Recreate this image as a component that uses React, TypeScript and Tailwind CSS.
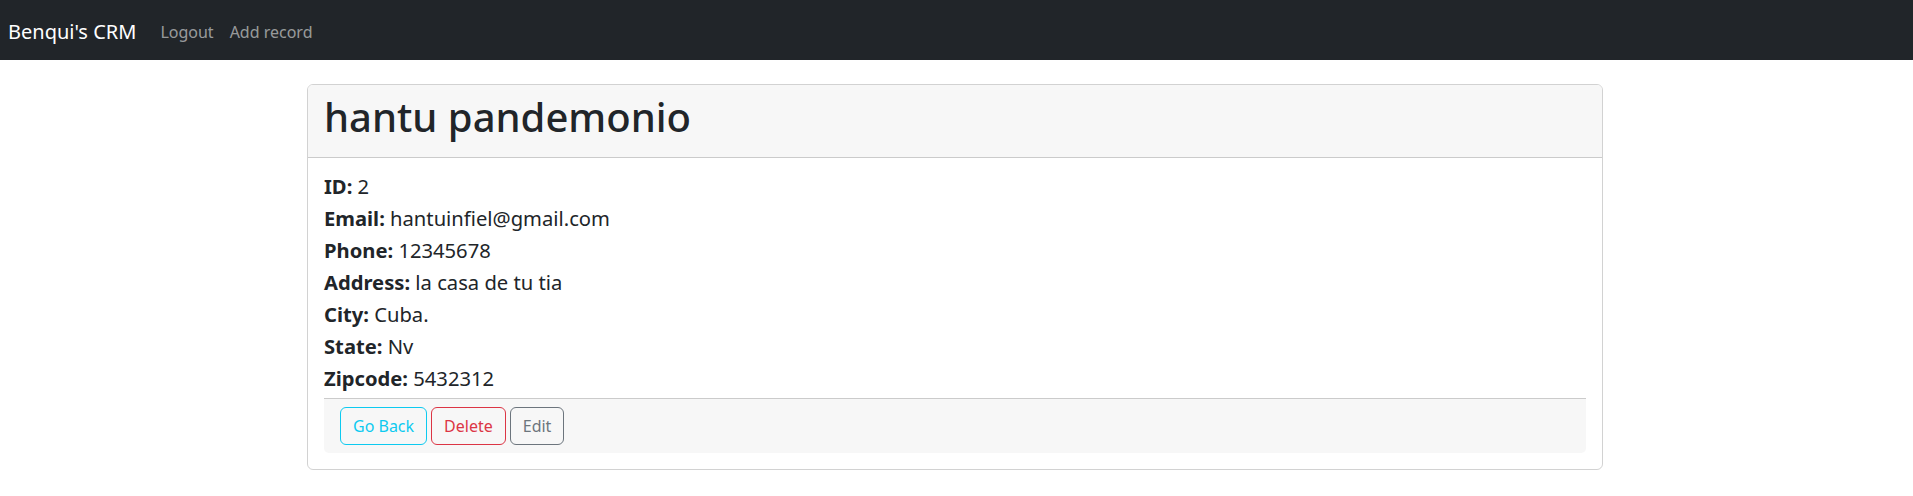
export default function App() {
  const rows: [string, string][] = [
    ["ID:", "2"],
    ["Email:", "hantuinfiel@gmail.com"],
    ["Phone:", "12345678"],
    ["Address:", "la casa de tu tia"],
    ["City:", "Cuba."],
    ["State:", "Nv"],
    ["Zipcode:", "5432312"],
  ];
  return (
    <div className="min-h-[496px] bg-white text-[#212529] font-['Noto_Sans',sans-serif] text-base leading-6">
      <nav className="h-[60px] bg-[#212529] flex items-center px-2 pt-[3px]">
        <a className="text-white text-[20px] leading-[30px] mr-4">Benqui's CRM</a>
        <a className="text-[rgba(255,255,255,0.55)] px-2 leading-6">Logout</a>
        <a className="text-[rgba(255,255,255,0.55)] px-2 leading-6">Add record</a>
      </nav>
      <div className="w-[1323px] mx-auto pl-3 pr-[15px] mt-6">
        <div className="border border-[rgba(0,0,0,0.175)] rounded-[6px]">
          <div className="bg-[#f7f7f7] border-b border-[rgba(0,0,0,0.175)] rounded-t-[5px] px-4 py-2">
            <h1 className="text-[40px] leading-[48px] font-medium mb-2">hantu pandemonio</h1>
          </div>
          <div className="p-4">
            {rows.map(([k, v]) => (
              <p key={k} className="mb-2 text-[20.2px] leading-6">
                <strong className="font-bold">{k}</strong> {v}
              </p>
            ))}
            <div className="bg-[#f7f7f7] border-t border-[rgba(0,0,0,0.175)] rounded-b-[5px] px-4 py-2 flex gap-1">
              <button className="border border-[#0dcaf0] text-[#0dcaf0] rounded-[6px] px-3 py-1.5 leading-6">Go Back</button>
              <button className="border border-[#dc3545] text-[#dc3545] rounded-[6px] px-3 py-1.5 leading-6">Delete</button>
              <button className="border border-[#6c757d] text-[#6c757d] rounded-[6px] px-3 py-1.5 leading-6">Edit</button>
            </div>
          </div>
        </div>
      </div>
    </div>
  );
}
